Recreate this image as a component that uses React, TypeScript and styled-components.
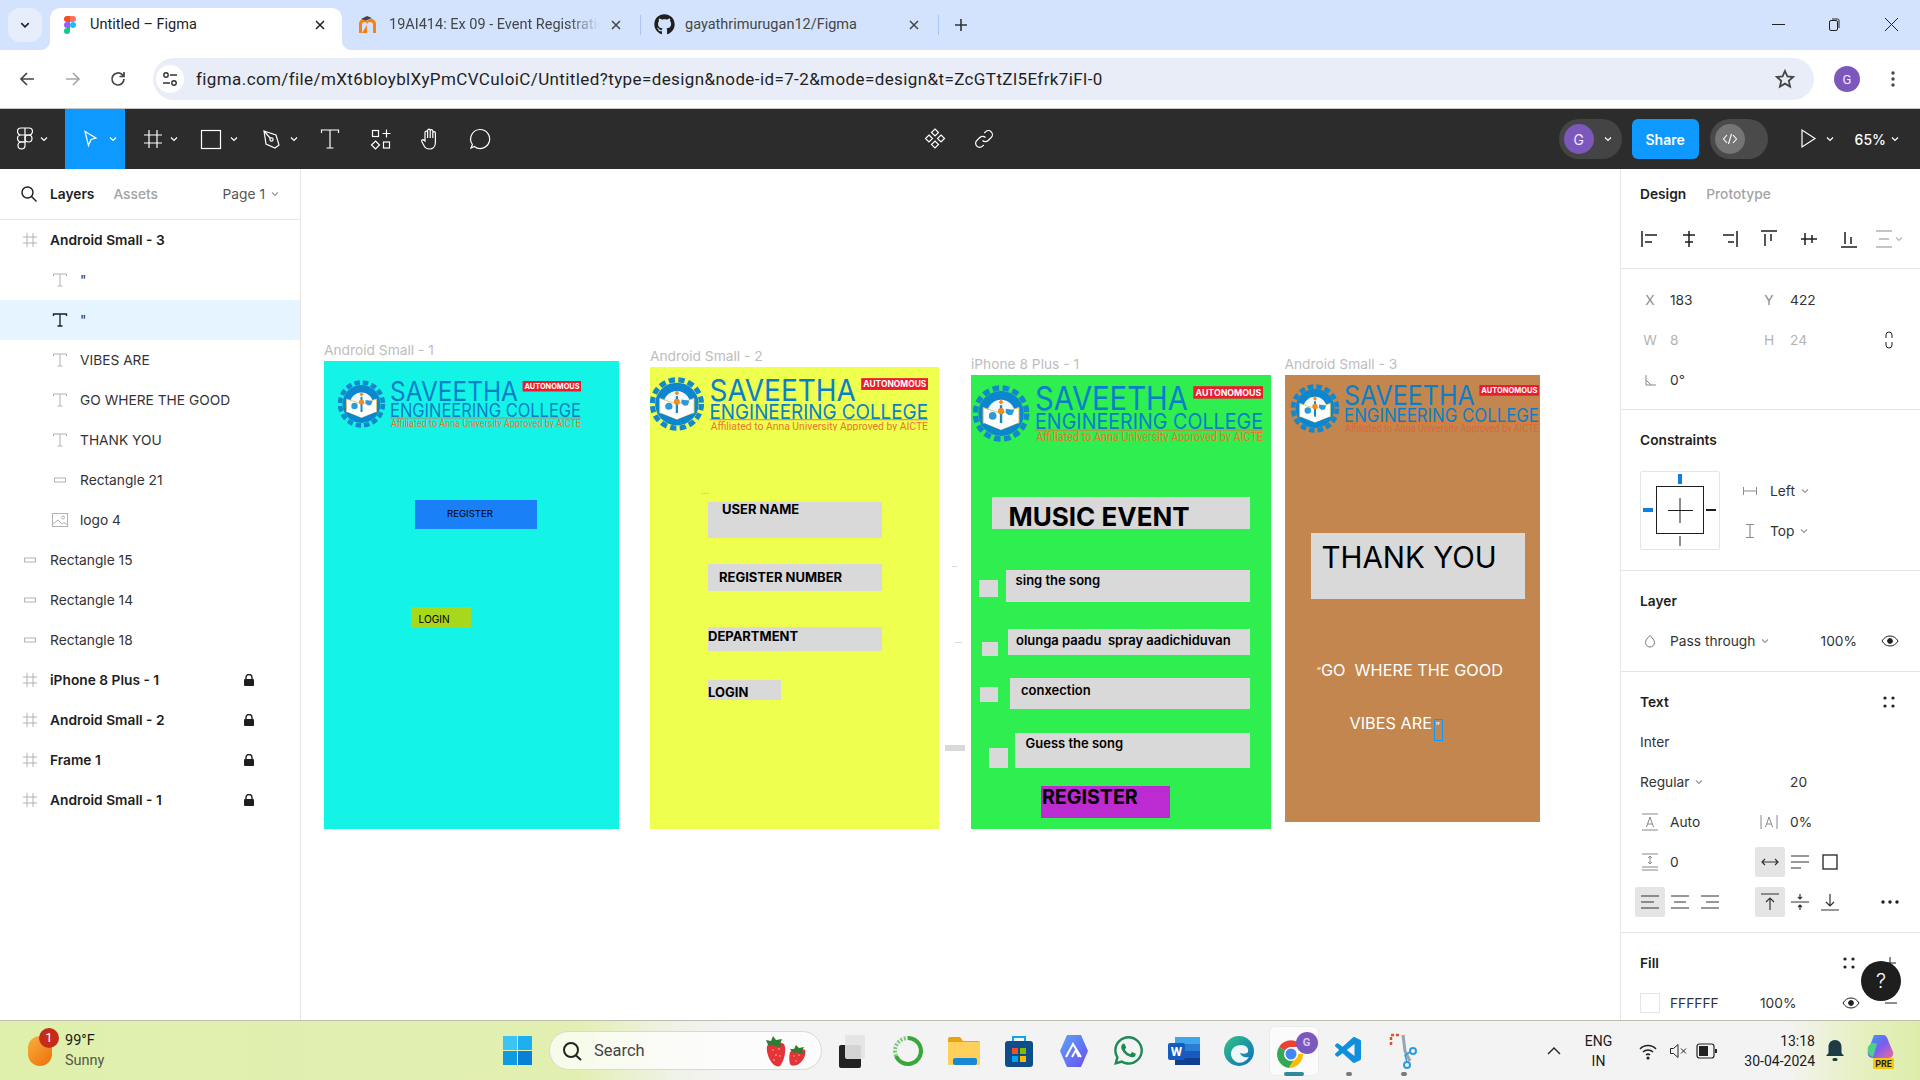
import React from "react";
import styled, { createGlobalStyle, css } from "styled-components";
import { FaGithub, FaWhatsapp } from "react-icons/fa";
import { VscVscode } from "react-icons/vsc";

const Global = createGlobalStyle`
  html, body { margin: 0; padding: 0; background: #fff; overflow: hidden; }
  * { box-sizing: border-box; }
  #root { width: 1920px; height: 1080px; }
`;

const UI = `"Roboto", "Liberation Sans", sans-serif`;
const INTER = `"Inter", "Liberation Sans", sans-serif`;

const Page = styled.div`
  width: 1920px; height: 1080px; display: flex; flex-direction: column; overflow: hidden;
  font-family: ${UI}; color: #1e1e1e;
`;

/* ---------- browser chrome ---------- */
const TabStrip = styled.div`
  height: 50px; background: #d3e3fd; display: flex; align-items: flex-end; flex: none; color: #1f1f1f;
`;
const TabSearch = styled.div`
  width: 34px; height: 34px; margin: 0 8px 8px 8px; border-radius: 12px; background: #e6eefc;
  display: flex; align-items: center; justify-content: center;
`;
const Tab = styled.div<{ $active?: boolean; $w: number; $pl: number; $pr: number; $gap: number }>`
  width: ${p => p.$w}px; height: 42px; padding: 0 ${p => p.$pr}px 9px ${p => p.$pl}px; display: flex; align-items: center;
  gap: ${p => p.$gap}px; position: relative; font-size: 14.5px; color: #444746;
  ${p => p.$active && css`
    background: #fff; border-radius: 10px 10px 0 0; color: #1f1f1f;
    &::before, &::after { content: ""; position: absolute; bottom: 0; width: 10px; height: 10px; }
    &::before { left: -10px; background: radial-gradient(circle at 0 0, transparent 10px, #fff 10.5px); }
    &::after { right: -10px; background: radial-gradient(circle at 100% 0, transparent 10px, #fff 10.5px); }
  `}
`;
const TabTitle = styled.span<{ $fade?: boolean }>`
  flex: 1; white-space: nowrap; overflow: hidden;
  ${p => p.$fade && css`-webkit-mask-image: linear-gradient(90deg, #000 85%, transparent 100%);`}
`;
const TabSep = styled.div`
  width: 1px; height: 20px; background: #a8c4ef; align-self: center; margin-top: 0; flex: none;
`;
const NewTab = styled.div`
  width: 44px; display: flex; justify-content: center; align-self: center;
`;
const WinButtons = styled.div`
  margin-left: auto; display: flex; align-self: stretch; align-items: center; height: 48px;
`;
const WinButton = styled.div<{ $w: number }>`
  width: ${p => p.$w}px; display: flex; justify-content: center;
`;
const ChromeBar = styled.div`
  height: 59px; background: #fff; flex: none; border-bottom: 1px solid #c8c8c8; display: flex; align-items: center;
  border-top-right-radius: 8px; position: relative;
`;
const NavButton = styled.div<{ $w: number }>`
  width: ${p => p.$w}px; display: flex; justify-content: center; flex: none;
`;
const UrlBar = styled.div`
  margin-left: 9px; width: 1661px; height: 42px; border-radius: 21px; background: #e9edf8; display: flex; align-items: center; flex: none;
  padding: 0 18px 0 3px;
`;
const UrlTune = styled.div`
  width: 28px; height: 28px; border-radius: 50%; background: #fff; display: flex; align-items: center; justify-content: center; flex: none;
`;
const UrlText = styled.span`
  margin-left: 12px; font-size: 17px; letter-spacing: 0.4px; color: #1f1f1f; white-space: nowrap; flex: 1;
`;
const Avatar = styled.div<{ $size: number; $font: number }>`
  width: ${p => p.$size}px; height: ${p => p.$size}px; border-radius: 50%; background: #7c58bd; color: #f1e9ff; flex: none;
  font-size: ${p => p.$font}px; display: flex; align-items: center; justify-content: center;
`;

/* ---------- figma toolbar ---------- */
const Toolbar = styled.div`
  height: 60px; background: #2c2c2c; flex: none; display: flex; align-items: stretch; color: #fff;
`;
const Tool = styled.div<{ $w: number; $pl: number; $gap?: number; $active?: boolean; $ml?: number }>`
  width: ${p => p.$w}px; padding-left: ${p => p.$pl}px; display: flex; align-items: center; gap: ${p => p.$gap ?? 0}px; flex: none;
  margin-left: ${p => p.$ml ?? 0}px;
  background: ${p => (p.$active ? "#0d99ff" : "transparent")};
`;
const ToolbarRight = styled.div`
  margin-left: auto; display: flex; align-items: center; padding-right: 21px; font-family: ${INTER}; font-size: 14px;
`;
const Pill = styled.div<{ $w: number; $mr: number; $bg: string }>`
  width: ${p => p.$w}px; margin-right: ${p => p.$mr}px; height: 40px; border-radius: 20px; background: ${p => p.$bg};
  display: flex; align-items: center; padding-left: 5px; gap: 10px;
`;
const ShareButton = styled.div`
  width: 67px; height: 40px; border-radius: 6px; background: #0d99ff; margin-right: 11px; color: #fff; font-weight: 600; font-size: 14px;
  display: flex; align-items: center; justify-content: center;
`;
const DevKnob = styled.div`
  width: 30px; height: 30px; border-radius: 50%; background: #757575; display: flex; align-items: center; justify-content: center; margin-left: 0;
`;
const PlayWrap = styled.div`
  margin-right: 6px; flex: none;
`;
const ZoomLabel = styled.span`
  margin-left: 21px; margin-right: 5px; font-weight: 500;
`;

/* ---------- main ---------- */
const Main = styled.div`
  height: 851px; display: flex; flex: none; font-family: ${INTER}; background: #fff;
`;
const LeftPanel = styled.aside`
  width: 301px; border-right: 1px solid #e5e5e5; flex: none; display: flex; flex-direction: column;
`;
const LeftHead = styled.div`
  height: 51px; border-bottom: 1px solid #e5e5e5; display: flex; align-items: center; padding: 0 21px 0 20px; flex: none; font-size: 13.75px;
`;
const TabLabel = styled.span<{ $on?: boolean; $ml: number }>`
  margin-left: ${p => p.$ml}px; font-weight: ${p => (p.$on ? 600 : 500)}; color: ${p => (p.$on ? "#1e1e1e" : "#a3a3a3")}; font-size: 13.75px;
`;
const PageSelect = styled.div`
  margin-left: auto; display: flex; align-items: center; gap: 6px; color: #555;
`;
const LayerRow = styled.div<{ $indent: boolean; $selected?: boolean }>`
  height: 40px; display: flex; align-items: center; flex: none; padding: 0 46px 0 ${p => (p.$indent ? 50 : 20)}px;
  gap: 10px; background: ${p => (p.$selected ? "#e5f4ff" : "transparent")};
`;
const LayerName = styled.span<{ $strong?: boolean }>`
  font-size: 13.75px; font-weight: ${p => (p.$strong ? 600 : 400)}; color: ${p => (p.$strong ? "#1e1e1e" : "#333")}; flex: 1; white-space: nowrap;
`;
const LayerIcon = styled.div`
  width: 20px; display: flex; justify-content: center; flex: none; color: #b2b2b2;
`;

const Canvas = styled.main`
  flex: 1; position: relative; overflow: hidden; background: #fff;
`;
const ArtFrame = styled.div<{ $x: number; $y: number; $w: number; $h: number; $bg: string }>`
  position: absolute; left: ${p => p.$x}px; top: ${p => p.$y}px; width: ${p => p.$w}px; height: ${p => p.$h}px; background: ${p => p.$bg};
`;
const FrameLabel = styled.span`
  position: absolute; left: 0; bottom: 100%; margin-bottom: 2px; font-size: 13.75px; line-height: 17px; color: #bdbdbd; white-space: nowrap;
`;
const Block = styled.div<{ $x: number; $y: number; $w: number; $h: number; $bg?: string }>`
  position: absolute; left: ${p => p.$x}px; top: ${p => p.$y}px; width: ${p => p.$w}px; height: ${p => p.$h}px; background: ${p => p.$bg ?? "#d9d9d9"};
`;
const BlockText = styled.span<{ $x: number; $cy: number; $size: number; $weight: number; $color?: string }>`
  position: absolute; left: ${p => p.$x}px; top: ${p => p.$cy}px; transform: translateY(-50%); font-size: ${p => p.$size}px;
  font-weight: ${p => p.$weight}; color: ${p => p.$color ?? "#000"}; white-space: pre; line-height: 1;
`;
const TinyQuote = styled.span`
  font-size: 10px; vertical-align: 1px;
`;
const Selection = styled.div`
  position: absolute; left: 149px; top: 344px; width: 9px; height: 22px; border: 1.5px solid #0d99ff; color: #fff;
  font-size: 10px; line-height: 12px; padding-left: 1px;
`;
const LogoSvg = styled.svg<{ $x: number; $y: number; $w: number; $h: number }>`
  position: absolute; left: ${p => p.$x}px; top: ${p => p.$y}px; width: ${p => p.$w}px; height: ${p => p.$h}px;
`;

/* ---------- right panel ---------- */
const RightPanel = styled.aside`
  width: 300px; border-left: 1px solid #e5e5e5; flex: none; font-size: 13.75px; color: #333; overflow: hidden; position: relative;
`;
const RightTabs = styled.div`
  height: 50px; display: flex; align-items: center; padding-left: 19px; gap: 20px;
`;
const Section = styled.section<{ $pt?: number; $h: number }>`
  height: ${p => p.$h}px; border-bottom: 1px solid #e5e5e5; padding: ${p => p.$pt ?? 0}px 0 0 19px;
`;
const AlignRow = styled.div`
  height: 40px; display: flex; align-items: center; margin-left: -1px;
`;
const AlignCell = styled.div<{ $w: number }>`
  width: ${p => p.$w}px; display: flex; align-items: center; justify-content: center; flex: none; gap: 2px;
`;
const SectionTitle = styled.div`
  height: 40px; display: flex; align-items: center; justify-content: space-between; font-weight: 600; color: #1e1e1e; padding-right: 25px;
`;
const FillTitle = styled(SectionTitle)`
  margin-top: 10px; padding-left: 19px; padding-right: 23px;
`;
const PropRow = styled.div<{ $h?: number }>`
  height: ${p => p.$h ?? 40}px; display: grid; grid-template-columns: 30px 89px 31px 89px 20px; align-items: center;
`;
const PropLabel = styled.span<{ $muted?: boolean }>`
  width: 20px; text-align: center; color: ${p => (p.$muted ? "#b3b3b3" : "#8c8c8c")}; display: flex; justify-content: center;
`;
const PropValue = styled.span<{ $muted?: boolean; $ml?: number; $w?: number; $span?: boolean }>`
  color: ${p => (p.$muted ? "#b3b3b3" : "#333")}; display: flex; align-items: center; gap: 6px; white-space: nowrap;
  margin-left: ${p => p.$ml ?? 0}px;
  ${p => p.$w && `width: ${p.$w}px;`}
  ${p => p.$span && `grid-column: 1 / span 2;`}
`;
const ConstraintBody = styled.div`
  display: flex; margin-top: 11px;
`;
const ConstraintBox = styled.div`
  width: 80px; height: 79px; border: 1px solid #e5e5e5; border-radius: 2px; flex: none;
`;
const ConstraintSelects = styled.div`
  margin-left: 22px; display: flex; flex-direction: column;
`;
const ConstraintRow = styled.div`
  height: 40px; display: flex; align-items: center; gap: 12px; color: #333;
`;
const LayerModeRow = styled.div`
  height: 40px; display: flex; align-items: center; padding-right: 21px;
`;
const Percent = styled.span`
  margin-left: auto; margin-right: 24px;
`;
const ButtonRow = styled.div`
  height: 40px; display: flex; align-items: center; margin-left: -5px;
`;
const InlineButtons = styled.div`
  display: flex; margin-left: -5px;
`;
const SquareBtn = styled.div<{ $on?: boolean; $ml?: number }>`
  width: 30px; height: 30px; border-radius: 2px; display: flex; align-items: center; justify-content: center; flex: none;
  margin-left: ${p => p.$ml ?? 0}px; background: ${p => (p.$on ? "#e5e5e5" : "transparent")};
`;
const PlainRow = styled.div`
  height: 40px; display: flex; align-items: center;
`;
const FillRow = styled(PlainRow)`
  padding-left: 19px;
`;
const Swatch = styled.div`
  width: 20px; height: 20px; border: 1px solid #e5e5e5; background: #fff; flex: none;
`;
const FillIcons = styled.div`
  margin-left: 46px; display: flex; align-items: center; gap: 24px;
`;
const FillHead = styled.div`
  display: flex; align-items: center; gap: 28px;
`;
const HelpBubble = styled.div`
  position: absolute; left: 240px; top: 792px; width: 40px; height: 40px; border-radius: 50%; background: #1e1e1e; color: #fff;
  font-size: 20px; display: flex; align-items: center; justify-content: center; font-weight: 300;
`;

/* ---------- taskbar ---------- */
const Taskbar = styled.footer`
  height: 60px; flex: none; border-top: 1px solid #bcbfb0; display: flex; align-items: center; color: #1b1b1b;
  background: linear-gradient(90deg, #dff0ac 0, #e2efb2 30%, #eff2e6 35%, #f3f3f3 38%, #f3f3f3 93%, #e6f0c0 97%, #dcedaa 100%);
`;
const Weather = styled.div`
  width: 503px; flex: none; height: 100%; position: relative; display: flex; flex-direction: column; justify-content: center; padding-left: 65px;
  font-size: 14.5px; line-height: 20px;
`;
const Sun = styled.div`
  position: absolute; left: 28px; top: 15px; width: 24px; height: 30px; border-radius: 12px; background: linear-gradient(135deg, #f8b13a, #ee6d0d);
`;
const Badge = styled.div`
  position: absolute; left: 39px; top: 7px; width: 20px; height: 20px; border-radius: 50%; background: #c42b1c; color: #fff; font-size: 13px;
  display: flex; align-items: center; justify-content: center;
`;
const SunnyText = styled.span`
  color: #55584a;
`;
const StartIcon = styled.div`
  width: 29px; height: 29px; flex: none; margin-right: 17px; display: grid; grid-template-columns: 1fr 1fr; gap: 1.5px;
`;
const StartPane = styled.div<{ $bg: string }>`
  background: ${p => p.$bg};
`;
const SearchBox = styled.div`
  width: 273px; height: 39px; border-radius: 20px; background: rgba(255, 255, 255, 0.72); border: 1px solid #d6dcca; display: flex; align-items: center;
  padding: 0 12px 0 11px; flex: none; font-size: 16.5px; color: #444;
`;
const SearchLabel = styled.span`
  margin-left: 11px; flex: 1;
`;
const AppSlot = styled.div<{ $active?: boolean; $dot?: string; $w?: number }>`
  width: ${p => p.$w ?? 55}px; height: 48px; flex: none; display: flex; align-items: center; justify-content: center; position: relative; border-radius: 5px;
  ${p => p.$active && css`background: #fbfbfb; box-shadow: 0 0 0 1px #ececec; width: 48px; margin: 0 3.5px;`}
  ${p => p.$dot && css`
    &::after { content: ""; position: absolute; bottom: -1px; left: 50%; transform: translateX(-50%); height: 4px; border-radius: 2px;
      width: ${p.$active ? 20 : 6}px; background: ${p.$dot}; }
  `}
`;
const ChromeBadge = styled.div`
  position: absolute; left: 26px; top: 5px; width: 22px; height: 22px; border-radius: 50%; background: #7c58bd; color: #d9ccf0; font-size: 11px; font-weight: 700;
  display: flex; align-items: center; justify-content: center;
`;
const ChromeGlyph = styled.svg`
  margin-left: -6px; margin-top: 6px;
`;
const Tray = styled.div`
  margin-left: auto; display: flex; align-items: center; padding-right: 15px; height: 100%;
`;
const TraySlot = styled.div<{ $w: number }>`
  width: ${p => p.$w}px; display: flex; align-items: center; justify-content: center; flex: none;
`;
const LangStack = styled.div`
  width: 54px; text-align: center; font-size: 14px; line-height: 20px; margin-right: 8px; flex: none;
`;
const Clock = styled.div`
  width: 93px; text-align: right; font-size: 14px; line-height: 20px; flex: none;
`;

/* ---------- icons ---------- */
type IP = { s?: number; c?: string; w?: number; vb?: number; children?: React.ReactNode };
const Ic = ({ s = 24, c = "currentColor", w = 1, vb, children }: IP) => (
  <svg width={s} height={s} viewBox={`0 0 ${vb ?? s} ${vb ?? s}`} fill="none" stroke={c} strokeWidth={w} style={{ display: "block", flex: "none" }}>
    {children}
  </svg>
);
const Chev = ({ c = "#fff", s = 8 }: { c?: string; s?: number }) => (
  <svg width={s} height={s} viewBox="0 0 8 8" fill="none" stroke={c} strokeWidth="1.2" style={{ flex: "none" }}><path d="M1 2.5 4 5.5 7 2.5" /></svg>
);
const FrameGlyph = () => (
  <Ic s={14} c="#b2b2b2"><path d="M4 0v14M10 0v14M0 4h14M0 10h14" /></Ic>
);
const TGlyph = ({ dark }: { dark?: boolean }) => (
  <Ic s={16} c={dark ? "#1e1e1e" : "#b2b2b2"} w={dark ? 1.3 : 1}><path d="M1.5 4V2h13v2M8 2v12M5.5 14h5" /></Ic>
);
const RectGlyph = () => <Ic s={14} c="#b2b2b2"><rect x="1.5" y="5" width="11" height="4" /></Ic>;
const ImgGlyph = () => (
  <Ic s={16} c="#b2b2b2"><rect x="0.5" y="1.5" width="15" height="13" /><path d="M1 12l5-4 4 4 2-1.5 3 2" /><circle cx="11" cy="5.5" r="1.5" /></Ic>
);
const LockGlyph = () => (
  <svg width="10" height="12" viewBox="0 0 10 12" style={{ flex: "none" }}><path d="M2 5V3.5a3 3 0 0 1 6 0V5" fill="none" stroke="#1e1e1e" strokeWidth="1.4" /><rect y="5" width="10" height="7" rx="1" fill="#1e1e1e" /></svg>
);
const EyeGlyph = () => (
  <Ic s={18} c="#1e1e1e"><path d="M1 9c2-3.4 4.8-5 8-5s6 1.6 8 5c-2 3.4-4.8 5-8 5s-6-1.6-8-5Z" /><circle cx="9" cy="9" r="2.4" fill="#1e1e1e" /></Ic>
);
const Dots4 = () => (
  <svg width="12" height="12" viewBox="0 0 12 12" fill="#1e1e1e"><circle cx="2" cy="2" r="1.6" /><circle cx="10" cy="2" r="1.6" /><circle cx="2" cy="10" r="1.6" /><circle cx="10" cy="10" r="1.6" /></svg>
);
const AlignIcon = ({ d, c = "#1e1e1e" }: { d: string; c?: string }) => (
  <Ic s={18} c={c} w={1.5}><path d={d} /></Ic>
);
const LineIcon = ({ d, c = "#333", sw = 1.2 }: { d: string; c?: string; sw?: number }) => (
  <Ic s={18} c={c} w={sw}><path d={d} /></Ic>
);

const FigmaFavicon = () => (
  <svg width="12" height="18" viewBox="0 0 12 18" style={{ flex: "none", marginLeft: 2, marginRight: 2 }}>
    <path d="M3 0h3v6H3a3 3 0 0 1 0-6Z" fill="#f24e1e" /><path d="M6 0h3a3 3 0 0 1 0 6H6Z" fill="#ff7262" />
    <path d="M3 6h3v6H3a3 3 0 0 1 0-6Z" fill="#a259ff" /><circle cx="9" cy="9" r="3" fill="#1abcfe" />
    <path d="M3 12h3v3a3 3 0 1 1-3-3Z" fill="#0acf83" />
  </svg>
);
const MoodleFavicon = () => (
  <svg width="20" height="18" viewBox="0 0 20 18" style={{ flex: "none" }}>
    <path d="M3 17V8.5C3 7 4 6 5.5 6S8 7 8 8.5V17M8 9c0-2 1.200-3 3-3 2 0 3 1 3 3v8h3V8c0-3-2-5-5-5-2 0-3 .7-4 2-1-1.300-2-2-3.500-2C2 3 0 5 0 8v9h3Z" fill="#f98012" />
    <path d="M2 3l6-3 5 2-6 2.500Z" fill="#444" />
  </svg>
);
const FigmaMenu = () => (
  <svg width="18" height="26" viewBox="0 0 18 26" fill="none" stroke="#fff" strokeWidth="1.2" style={{ flex: "none" }}>
    <path d="M5 2h4v7H5a3.500 3.500 0 0 1 0-7ZM9 2h4a3.500 3.500 0 0 1 0 7H9ZM5 9h4v7H5a3.500 3.500 0 0 1 0-7Z" />
    <circle cx="12.500" cy="12.500" r="3.500" /><path d="M5 16h4v3.500A3.500 3.500 0 1 1 5 16Z" />
  </svg>
);

const Logo = ({ x, y, w, h, dim }: { x: number; y: number; w: number; h: number; dim?: boolean }) => (
  <LogoSvg $x={x} $y={y} $w={w} $h={h} viewBox="0 0 243 48" preserveAspectRatio="none">
    <circle cx="23.500" cy="24" r="21.500" fill="none" stroke="#1587cc" strokeWidth="4.500" strokeDasharray="5.500 3" />
    <circle cx="23.500" cy="24" r="19" fill="#0b86cf" />
    <circle cx="23.500" cy="24" r="11.500" fill="#f4fbff" />
    <path d="M8.500 19 23.500 24l15-5v13l-15 6-15-6Z" fill="#fff" stroke="#e8c25c" strokeWidth="0.800" />
    <path d="M9 32l14.500 6L38 32l-2 4-12.500 6L11 36Z" fill="#0b86cf" />
    <circle cx="16.500" cy="26" r="3.200" fill="#2a9ad8" />
    <path d="M27.500 20l7 1-1.500 4-3 .5-2.500-2Z" fill="#2a9ad8" />
    <rect x="22.500" y="17" width="2" height="15" fill="#1587cc" />
    <circle cx="23.500" cy="22" r="2.600" fill="#f08a24" />
    <path d="M21.500 14.500 23.500 12l2 2.500-2 2Z" fill="#f08a24" />
    <text x="52" y="21" fontFamily={INTER} fontSize="27" fontWeight="400" fill="#0a7fc9" textLength="128" lengthAdjust="spacingAndGlyphs">SAVEETHA</text>
    <text x="52" y="37" fontFamily={INTER} fontSize="18" fontWeight="400" fill="#0a7fc9" textLength="191" lengthAdjust="spacingAndGlyphs">ENGINEERING COLLEGE</text>
    <rect x="52" y="37.600" width="191" height="0.800" fill="#e9772c" />
    <text x="53" y="47" fontFamily={UI} fontSize="10" fill={dim ? "#d8683c" : "#e9772c"} textLength="190" lengthAdjust="spacingAndGlyphs">Affiliated to Anna University  Approved by AICTE</text>
    <rect x="184.600" y="1" width="58.400" height="10.500" fill="#ec1c2e" />
    <text x="186.500" y="9" fontFamily={INTER} fontSize="7.500" fontWeight="700" fill="#fff" textLength="55" lengthAdjust="spacingAndGlyphs">AUTONOMOUS</text>
  </LogoSvg>
);

const layers = [
  { n: "Android Small - 3", k: "f" },
  { n: '"', k: "t", i: 1 },
  { n: '"', k: "t", i: 1, sel: 1 },
  { n: "VIBES ARE", k: "t", i: 1 },
  { n: "GO WHERE THE GOOD", k: "t", i: 1 },
  { n: "THANK YOU", k: "t", i: 1 },
  { n: "Rectangle 21", k: "r", i: 1 },
  { n: "logo 4", k: "m", i: 1 },
  { n: "Rectangle 15", k: "r" },
  { n: "Rectangle 14", k: "r" },
  { n: "Rectangle 18", k: "r" },
  { n: "iPhone 8 Plus - 1", k: "f", l: 1 },
  { n: "Android Small - 2", k: "f", l: 1 },
  { n: "Frame 1", k: "f", l: 1 },
  { n: "Android Small - 1", k: "f", l: 1 },
];

const formBlocks = [
  { b: [58, 135, 174, 36], t: "USER NAME", x: 14, cy: 7 },
  { b: [58, 197, 174, 27], t: "REGISTER NUMBER", x: 11, cy: 13 },
  { b: [58, 260, 174, 24], t: "DEPARTMENT", x: 0, cy: 9 },
  { b: [58, 313, 73, 20], t: "LOGIN", x: 0, cy: 12 },
];
const musicRows = [
  { b: [35, 195, 244, 32], t: "sing the song", x: 9.6, cy: 10, c: [8, 205, 19, 17] },
  { b: [37, 254, 242, 26], t: "olunga paadu  spray aadichiduvan", x: 8, cy: 11, c: [11.4, 267, 15.6, 14] },
  { b: [39, 303, 240, 31], t: "conxection", x: 11, cy: 12, c: [9, 312, 18, 15] },
  { b: [43.5, 358, 235.5, 35], t: "Guess the song", x: 11, cy: 10, c: [18, 373, 19, 20] },
];

export default function App() {
  return (
    <Page>
      <Global />
      <TabStrip>
        <TabSearch><Chev c="#1f1f1f" s={10} /></TabSearch>
        <Tab $active $w={292} $pl={12} $pr={16} $gap={12}>
          <FigmaFavicon />
          <TabTitle>Untitled – Figma</TabTitle>
          <Ic s={12} c="#1f1f1f" w={1.5}><path d="M2 2l8 8M10 2l-8 8" /></Ic>
        </Tab>
        <Tab $w={298} $pl={17} $pr={18} $gap={10}>
          <MoodleFavicon />
          <TabTitle $fade>19AI414: Ex 09 - Event Registration</TabTitle>
          <Ic s={12} c="#444" w={1.5}><path d="M2 2l8 8M10 2l-8 8" /></Ic>
        </Tab>
        <TabSep />
        <Tab $w={297} $pl={13} $pr={18} $gap={10}>
          <FaGithub size={21} color="#1f1f1f" style={{ flex: "none" }} />
          <TabTitle>gayathrimurugan12/Figma</TabTitle>
          <Ic s={12} c="#444" w={1.5}><path d="M2 2l8 8M10 2l-8 8" /></Ic>
        </Tab>
        <TabSep />
        <NewTab><Ic s={14} c="#333" w={1.6}><path d="M7 1v12M1 7h12" /></Ic></NewTab>
        <WinButtons>
          <WinButton $w={56}><Ic s={14} c="#222"><path d="M1 7.500h13" /></Ic></WinButton>
          <WinButton $w={56}><Ic s={14} c="#222"><rect x="2.500" y="3.500" width="8" height="10" rx="1.500" /><path d="M5 2h5.500A1.500 1.500 0 0 1 12 3.500V11" /></Ic></WinButton>
          <WinButton $w={58}><Ic s={15} c="#222"><path d="M1 1l13 13M14 1 1 14" /></Ic></WinButton>
        </WinButtons>
      </TabStrip>

      <ChromeBar>
        <NavButton $w={54}><Ic s={18} c="#444746" w={1.7}><path d="M16 9H3M9 3 3 9l6 6" /></Ic></NavButton>
        <NavButton $w={38}><Ic s={18} c="#a6a8a8" w={1.7}><path d="M2 9h13M9 3l6 6-6 6" /></Ic></NavButton>
        <NavButton $w={52}><Ic s={18} c="#444746" w={1.7}><path d="M15 9a6 6 0 1 1-1.800-4.300L15 6.500M15 2v4.500h-4.500" /></Ic></NavButton>
        <UrlBar>
          <UrlTune><Ic s={18} c="#333" w={1.4}><circle cx="5" cy="5" r="2.200" /><path d="M9 5h7M2 13h7" /><circle cx="13" cy="13" r="2.200" /></Ic></UrlTune>
          <UrlText>figma.com/file/mXt6bloyblXyPmCVCuloiC/Untitled?type=design&amp;node-id=7-2&amp;mode=design&amp;t=ZcGTtZl5Efrk7iFl-0</UrlText>
          <Ic s={22} c="#444746" w={1.8}><path d="M11 3l2.400 5.400 5.800.6-4.400 3.900 1.300 5.700-5.100-3-5.100 3 1.300-5.700L2.800 9l5.800-.6Z" /></Ic>
        </UrlBar>
        <NavButton $w={66}><Avatar $size={26} $font={13}>G</Avatar></NavButton>
        <NavButton $w={26}><svg width="4" height="16" viewBox="0 0 4 16" fill="#444746"><circle cx="2" cy="2" r="1.700" /><circle cx="2" cy="8" r="1.700" /><circle cx="2" cy="14" r="1.700" /></svg></NavButton>
      </ChromeBar>

      <Toolbar>
        <Tool $w={65} $pl={16} $gap={6}><FigmaMenu /><Chev /></Tool>
        <Tool $w={60} $pl={13} $gap={7} $active>
          <Ic c="#fff" w={1.2}><path d="M7 4.500 18 11l-5 1.500-2.500 6Z" /></Ic><Chev />
        </Tool>
        <Tool $w={58} $pl={16} $gap={5}>
          <Ic c="#fff" w={1.2}><path d="M8 3v18M16 3v18M3 8h18M3 16h18" /></Ic><Chev />
        </Tool>
        <Tool $w={60} $pl={16} $gap={7}>
          <Ic c="#fff" w={1.2}><rect x="2.500" y="3.500" width="19" height="18" /></Ic><Chev />
        </Tool>
        <Tool $w={58} $pl={16} $gap={7}>
          <Ic c="#fff" w={1.2}><path d="M5 4 17 8l3 10-4 3-9-4ZM5 4l6.500 7.500" /><circle cx="12.500" cy="12.500" r="1.600" /></Ic><Chev />
        </Tool>
        <Tool $w={58} $pl={17}>
          <Ic c="#fff" w={1.2}><path d="M3.500 6V3h17v3M12 3v18M8.500 21h7" /></Ic>
        </Tool>
        <Tool $w={44} $pl={10}>
          <Ic c="#fff" w={1.200}><rect x="3.500" y="3.500" width="6" height="6" /><path d="M17.500 2.500v8M13.500 6.500h8M6.500 14l4 4-4 4-4-4Z" /><rect x="14.500" y="15" width="6" height="6" /></Ic>
        </Tool>
        <Tool $w={54} $pl={15}>
          <Ic c="#fff" w={1.2}><path d="M7 14V5.500a1.300 1.300 0 0 1 2.600 0V11 3.500a1.300 1.300 0 0 1 2.600 0V11 4a1.300 1.300 0 0 1 2.600 0v7-5a1.300 1.300 0 0 1 2.600 0v9.500c0 4-2.500 6.500-6 6.500-3 0-4.500-1.500-5.500-3.500L3.800 14.500c-.8-1.500 1.300-2.500 2.200-1.200Z" /></Ic>
        </Tool>
        <Tool $w={46} $pl={11}>
          <Ic c="#fff" w={1.2}><path d="M12 2.500a9.500 9.500 0 1 1-5.700 17L3 21l1.400-3.500A9.500 9.500 0 0 1 12 2.500Z" /></Ic>
        </Tool>
        <Tool $w={40} $pl={8} $ml={412}>
          <Ic c="#fff" w={1.2}><path d="M12 2l3.500 3.500L12 9 8.500 5.500ZM6 8l3.500 3.500L6 15l-3.500-3.500ZM18 8l3.500 3.500L18 15l-3.500-3.500ZM12 14l3.500 3.500L12 21l-3.500-3.500Z" /></Ic>
        </Tool>
        <Tool $w={40} $pl={8} $ml={9}>
          <Ic c="#fff" w={1.2}><path d="M10.500 13.500a4 4 0 0 0 5.700 0l3-3a4 4 0 0 0-5.700-5.700l-1.200 1.200M13.500 10.500a4 4 0 0 0-5.700 0l-3 3a4 4 0 0 0 5.700 5.700l1.200-1.200" /></Ic>
        </Tool>
        <ToolbarRight>
          <Pill $w={63} $mr={10} $bg="#444"><Avatar $size={30} $font={14}>G</Avatar><Chev /></Pill>
          <ShareButton>Share</ShareButton>
          <Pill $w={58} $mr={26} $bg="#4a4a4a">
            <DevKnob><Ic s={18} c="#fff" w={1.1}><path d="M6 5 2.500 9 6 13M12 5l3.500 4-3.500 4M10.500 4l-3 10" /></Ic></DevKnob>
          </Pill>
          <PlayWrap><Ic s={26} c="#fff" w={1.2}><path d="M8 4v17l13-8.500Z" /></Ic></PlayWrap>
          <Chev />
          <ZoomLabel>65%</ZoomLabel>
          <Chev />
        </ToolbarRight>
      </Toolbar>

      <Main>
        <LeftPanel>
          <LeftHead>
            <Ic s={18} c="#1e1e1e" w={1.4}><circle cx="7.500" cy="7.500" r="5.500" /><path d="M11.500 11.500 16.500 16.500" /></Ic>
            <TabLabel $on $ml={12}>Layers</TabLabel>
            <TabLabel $ml={19}>Assets</TabLabel>
            <PageSelect>Page 1 <Chev c="#999" /></PageSelect>
          </LeftHead>
          {layers.map((l, i) => (
            <LayerRow key={i} $indent={!!l.i} $selected={!!l.sel}>
              <LayerIcon>
                {l.k === "f" && <FrameGlyph />}
                {l.k === "t" && <TGlyph dark={!!l.sel} />}
                {l.k === "r" && <RectGlyph />}
                {l.k === "m" && <ImgGlyph />}
              </LayerIcon>
              <LayerName $strong={l.k === "f"}>{l.n}</LayerName>
              {l.l && <LockGlyph />}
            </LayerRow>
          ))}
        </LeftPanel>

        <Canvas>
          <ArtFrame $x={23} $y={192} $w={294.500} $h={468} $bg="#14f4e6">
            <FrameLabel>Android Small - 1</FrameLabel>
            <Logo x={14} y={19} w={243} h={48} />
            <Block $x={91} $y={139} $w={121.500} $h={29} $bg="#1a80f8"><BlockText $x={32} $cy={14} $size={9.600} $weight={400}>REGISTER</BlockText></Block>
            <Block $x={87} $y={246} $w={60} $h={21} $bg="#a8d81c"><BlockText $x={7.500} $cy={12} $size={10.200} $weight={400}>LOGIN</BlockText></Block>
          </ArtFrame>

          <ArtFrame $x={349} $y={198} $w={289} $h={462} $bg="#eeff4d">
            <FrameLabel>Android Small - 2</FrameLabel>
            <Logo x={0} y={10} w={278} h={54} />
            <BlockText $x={51} $cy={123} $size={9} $weight={400} $color="#b9c45a">...</BlockText>
            {formBlocks.map(f => (
              <Block key={f.t} $x={f.b[0]} $y={f.b[1]} $w={f.b[2]} $h={f.b[3]}>
                <BlockText $x={f.x} $cy={f.cy} $size={13} $weight={700}>{f.t}</BlockText>
              </Block>
            ))}
          </ArtFrame>

          <Block $x={651} $y={396.500} $w={5} $h={1} />
          <Block $x={654} $y={472.500} $w={7} $h={1.500} />
          <Block $x={644} $y={576} $w={20} $h={6} />

          <ArtFrame $x={670} $y={206} $w={300} $h={454} $bg="#2eee50">
            <FrameLabel>iPhone 8 Plus - 1</FrameLabel>
            <Logo x={2} y={10} w={290} h={57} />
            <Block $x={21} $y={122} $w={258} $h={32}><BlockText $x={16.500} $cy={20} $size={26} $weight={700}>MUSIC EVENT</BlockText></Block>
            {musicRows.map(r => (
              <React.Fragment key={r.t}>
                <Block $x={r.c[0]} $y={r.c[1]} $w={r.c[2]} $h={r.c[3]} />
                <Block $x={r.b[0]} $y={r.b[1]} $w={r.b[2]} $h={r.b[3]}>
                  <BlockText $x={r.x} $cy={r.cy} $size={13} $weight={600}>{r.t}</BlockText>
                </Block>
              </React.Fragment>
            ))}
            <Block $x={70} $y={411} $w={129} $h={32} $bg="#bb2bd0"><BlockText $x={1} $cy={12} $size={19.600} $weight={700}>REGISTER</BlockText></Block>
          </ArtFrame>

          <ArtFrame $x={983.500} $y={206} $w={255} $h={447} $bg="#c2864e">
            <FrameLabel>Android Small - 3</FrameLabel>
            <Logo x={6} y={9} w={248} h={49} dim />
            <Block $x={26} $y={158} $w={214} $h={66}><BlockText $x={11} $cy={25} $size={29.500} $weight={400}>THANK YOU</BlockText></Block>
            <BlockText $x={32} $cy={295} $size={16.250} $weight={400} $color="#fff"><TinyQuote>“</TinyQuote>GO  WHERE THE GOOD</BlockText>
            <BlockText $x={65} $cy={348} $size={16.250} $weight={400} $color="#fff">VIBES ARE</BlockText>
            <Selection>”</Selection>
          </ArtFrame>
        </Canvas>

        <RightPanel>
          <RightTabs>
            <TabLabel $on $ml={0}>Design</TabLabel>
            <TabLabel $ml={0}>Prototype</TabLabel>
          </RightTabs>
          <Section $h={50}>
            <AlignRow>
              <AlignCell $w={20}><AlignIcon d="M2 1v16M5 5h12M5 12h7" /></AlignCell>
              <AlignCell $w={60}><AlignIcon d="M9 1v16M3 5h12M5 12h8" /></AlignCell>
              <AlignCell $w={21}><AlignIcon d="M16 1v16M2 5h11M7 12h6" /></AlignCell>
              <AlignCell $w={58}><AlignIcon d="M1 1h16M5 4v12M11 4v7" /></AlignCell>
              <AlignCell $w={22}><AlignIcon d="M1 9h16M5 3v12M12 5v8" /></AlignCell>
              <AlignCell $w={58}><AlignIcon d="M1 17h16M5 2v12M11 7v7" /></AlignCell>
              <AlignCell $w={22}><AlignIcon c="#b3b3b3" d="M1 1h16M1 17h16M4 9h10" /><Chev c="#b3b3b3" /></AlignCell>
            </AlignRow>
          </Section>
          <Section $h={141} $pt={11}>
            <PropRow><PropLabel>X</PropLabel><PropValue>183</PropValue><PropLabel>Y</PropLabel><PropValue>422</PropValue></PropRow>
            <PropRow>
              <PropLabel $muted>W</PropLabel><PropValue $muted>8</PropValue><PropLabel $muted>H</PropLabel><PropValue $muted>24</PropValue>
              <Ic s={20} c="#1e1e1e" w={1}><path d="M7 8V5a3 3 0 0 1 6 0v3M7 12v3a3 3 0 0 0 6 0v-3" /></Ic>
            </PropRow>
            <PropRow>
              <PropLabel><Ic s={14} c="#888"><path d="M3 2v10h10M3 7l5 5" /></Ic></PropLabel><PropValue>0°</PropValue>
            </PropRow>
          </Section>
          <Section $h={161} $pt={10}>
            <SectionTitle>Constraints</SectionTitle>
            <ConstraintBody>
              <ConstraintBox>
                <svg width="78" height="77" viewBox="0 0 78 77" style={{ display: "block" }}>
                  <rect x="15.500" y="14.500" width="47" height="47" fill="none" stroke="#1e1e1e" />
                  <path d="M39 26v25M27 38.500h25" stroke="#1e1e1e" fill="none" />
                  <rect x="37" y="2" width="4" height="10" fill="#0d7fe0" />
                  <rect x="2" y="36" width="10" height="4" fill="#0d7fe0" />
                  <rect x="65" y="37" width="10" height="2" fill="#1e1e1e" />
                  <rect x="38.500" y="64" width="1" height="10" fill="#1e1e1e" />
                </svg>
              </ConstraintBox>
              <ConstraintSelects>
                <ConstraintRow><Ic s={16} c="#8c8c8c"><path d="M1.500 4v8M14.500 4v8M1.500 8h13" /></Ic><PropValue>Left <Chev c="#999" /></PropValue></ConstraintRow>
                <ConstraintRow><Ic s={16} c="#8c8c8c" w={1.2}><path d="M4 1.500h8M4 14.500h8M8 1.500v13" /></Ic><PropValue>Top <Chev c="#999" /></PropValue></ConstraintRow>
              </ConstraintSelects>
            </ConstraintBody>
          </Section>
          <Section $h={101} $pt={10}>
            <SectionTitle>Layer</SectionTitle>
            <LayerModeRow>
              <PropLabel><Ic s={14} c="#777"><path d="M7 1.500c2.500 2.500 4.500 4.800 4.500 7a4.500 4.500 0 0 1-9 0c0-2.200 2-4.500 4.500-7Z" /></Ic></PropLabel>
              <PropValue $ml={10}>Pass through <Chev c="#999" /></PropValue>
              <Percent>100%</Percent>
              <EyeGlyph />
            </LayerModeRow>
          </Section>
          <Section $h={261} $pt={10}>
            <SectionTitle>Text<Dots4 /></SectionTitle>
            <PlainRow>Inter</PlainRow>
            <PropRow>
              <PropValue $span>Regular <Chev c="#999" /></PropValue>
              <span />
              <PropValue>20</PropValue>
            </PropRow>
            <PropRow>
              <PropLabel><Ic s={18} c="#888"><path d="M1 1h16M1 17h16M5.500 14 9 4l3.500 10M6.800 11h4.400" /></Ic></PropLabel><PropValue>Auto</PropValue>
              <PropLabel><Ic s={20} c="#888"><path d="M2 3v14M18 3v14M6.500 15 10 5l3.500 10M7.800 12h4.400" /></Ic></PropLabel><PropValue>0%</PropValue>
            </PropRow>
            <PropRow>
              <PropLabel><Ic s={18} c="#888"><path d="M1 1h16M1 17h16M1 14h16M9 3v8M7 5l2-2 2 2M7 9l2 2 2-2" /></Ic></PropLabel><PropValue>0</PropValue>
              <SquareBtn $on $ml={-4}><LineIcon d="M1 9h16M4 6 1 9l3 3M14 6l3 3-3 3" /></SquareBtn>
              <InlineButtons>
                <SquareBtn><LineIcon d="M0 3h18M0 9h18M0 15h10" /></SquareBtn>
                <SquareBtn><Ic s={16} c="#222" w={1.3}><rect x="1" y="1" width="14" height="14" /></Ic></SquareBtn>
              </InlineButtons>
            </PropRow>
            <ButtonRow>
              <SquareBtn $on><LineIcon d="M0 3h18M0 9h13M0 15h18" /></SquareBtn>
              <SquareBtn><LineIcon d="M0 3h18M3 9h12M0 15h18" /></SquareBtn>
              <SquareBtn><LineIcon d="M0 3h18M5 9h13M0 15h18" /></SquareBtn>
              <SquareBtn $on $ml={30}><LineIcon d="M0 1h18M9 17V5M5 9l4-4 4 4" /></SquareBtn>
              <SquareBtn><LineIcon d="M0 9h18M9 1v5M7 4l2 2 2-2M9 17v-5M7 14l2-2 2 2" /></SquareBtn>
              <SquareBtn><LineIcon d="M0 17h18M9 1v12M5 9l4 4 4-4" /></SquareBtn>
              <SquareBtn $ml={30}><svg width="18" height="4" viewBox="0 0 18 4" fill="#1e1e1e"><circle cx="2" cy="2" r="1.700" /><circle cx="9" cy="2" r="1.700" /><circle cx="16" cy="2" r="1.700" /></svg></SquareBtn>
            </ButtonRow>
          </Section>
          <FillTitle>
            Fill
            <FillHead><Dots4 /><Ic s={14} c="#1e1e1e"><path d="M7 1v12M1 7h12" /></Ic></FillHead>
          </FillTitle>
          <FillRow>
            <Swatch /><PropValue $ml={10} $w={90}>FFFFFF</PropValue>100%
            <FillIcons><EyeGlyph /><Ic s={14} c="#1e1e1e"><path d="M1 7h12" /></Ic></FillIcons>
          </FillRow>
          <HelpBubble>?</HelpBubble>
        </RightPanel>
      </Main>

      <Taskbar>
        <Weather>
          <Sun /><Badge>1</Badge>
          <span>99°F</span>
          <SunnyText>Sunny</SunnyText>
        </Weather>
        <StartIcon>
          <StartPane $bg="#3cc4f5" /><StartPane $bg="#1eb0ee" /><StartPane $bg="#0f9be0" /><StartPane $bg="#0a7fd6" />
        </StartIcon>
        <SearchBox>
          <Ic s={22} c="#222" w={2}><circle cx="10" cy="10" r="7" /><path d="M15 15.500 20 20" /></Ic>
          <SearchLabel>Search</SearchLabel>
          <svg width="44" height="32" viewBox="0 0 44 32">
            <path d="M2 11c3-4 13-5 17-2 3 6 0 17-4 22-2 1-5 0-7-2C4 25 1 17 2 11Z" fill="#e5333a" />
            <path d="M25 17c3-3 11-4 15-2 2 5-3 13-8 15-3 1-6 1-7-1-1-3-1-8 0-12Z" fill="#e5333a" />
            <path d="M3 10 1 5l5 1 2-5 3 4 6-1-2 5 3 2-6 1-4-2-3 1ZM27 17l-2-3 4 0 2-4 3 3 5-1-2 4 3 2-5 1-3-2-3 1Z" fill="#2f7d32" />
            <g fill="#f7d36a"><circle cx="8" cy="15" r=".8" /><circle cx="14" cy="14" r=".8" /><circle cx="11" cy="20" r=".8" /><circle cx="15" cy="21" r=".8" /><circle cx="9" cy="25" r=".8" /><circle cx="29" cy="21" r=".7" /><circle cx="34" cy="20" r=".7" /><circle cx="31" cy="26" r=".7" /></g>
          </svg>
        </SearchBox>
        <AppSlot $w={58}>
          <svg width="30" height="36" viewBox="0 0 30 36"><rect x="3" y="12" width="22" height="23" rx="2" fill="#222" /><rect x="9" y="2" width="20" height="24" rx="2" fill="#e4e4e4" opacity=".92" /></svg>
        </AppSlot>
        <AppSlot $w={56}>
          <svg width="32" height="34" viewBox="0 0 32 34" fill="none"><path d="M16 4a13 13 0 1 1-12 18" stroke="#38a838" strokeWidth="4" /><path d="M4 22a13 13 0 0 1 12-18" stroke="#7cc97c" strokeWidth="4" strokeDasharray="2 1.500" /></svg>
        </AppSlot>
        <AppSlot>
          <svg width="34" height="30" viewBox="0 0 34 30"><path d="M1 3a2 2 0 0 1 2-2h10l3 4h15a2 2 0 0 1 2 2v4H1Z" fill="#e8a311" /><rect x="1" y="6" width="32" height="23" rx="1" fill="#ffd15c" /><rect x="6" y="22" width="24" height="7" rx="2" fill="#1a86d6" /></svg>
        </AppSlot>
        <AppSlot>
          <svg width="30" height="34" viewBox="0 0 30 34"><path d="M9 8V3h12v5" stroke="#0ea5e9" strokeWidth="2" fill="none" /><rect x="1" y="7" width="28" height="26" rx="3" fill="#0f4c8a" /><rect x="8" y="14" width="6" height="6" fill="#f25022" /><rect x="16" y="14" width="6" height="6" fill="#7fba00" /><rect x="8" y="22" width="6" height="6" fill="#00a4ef" /><rect x="16" y="22" width="6" height="6" fill="#ffb900" /></svg>
        </AppSlot>
        <AppSlot>
          <svg width="30" height="34" viewBox="0 0 30 34"><defs><linearGradient id="av" x1="0" y1="0" x2="1" y2="1"><stop offset="0" stopColor="#5ea4f5" /><stop offset="1" stopColor="#6a4ff0" /></linearGradient></defs><path d="M8 1h14l7 16-7 16H8L1 17Z" fill="url(#av)" /><path d="M7 23 14 10l8 13M13 23l4-7 3 7" stroke="#fff" strokeWidth="2" fill="none" /></svg>
        </AppSlot>
        <AppSlot><FaWhatsapp size={33} color="#1d8a55" /></AppSlot>
        <AppSlot>
          <svg width="32" height="30" viewBox="0 0 32 30"><rect x="7" y="1" width="25" height="28" rx="2" fill="#2b7cd3" /><rect x="7" y="1" width="25" height="7" fill="#41a5ee" /><rect x="7" y="15" width="25" height="7" fill="#185abd" /><rect x="7" y="22" width="25" height="7" fill="#103f91" /><rect x="0" y="7" width="17" height="17" rx="2" fill="#185abd" /><text x="8.500" y="20" textAnchor="middle" fontFamily={UI} fontSize="13" fontWeight="700" fill="#fff">W</text></svg>
        </AppSlot>
        <AppSlot>
          <svg width="32" height="32" viewBox="0 0 32 32"><defs><linearGradient id="ed" x1="0" y1="0" x2="1" y2="1"><stop offset="0" stopColor="#33c481" /><stop offset="1" stopColor="#0c6cc4" /></linearGradient></defs><circle cx="16" cy="16" r="15" fill="url(#ed)" /><path d="M8 19c0-6 5-9 10-9 5 0 8 3 7 7-1 2-5 2-8 1 1 3 4 5 9 4-3 5-9 7-13 5-3-2-5-5-5-8Z" fill="#fff" opacity=".92" /></svg>
        </AppSlot>
        <AppSlot $active $dot="#2f8a9b">
          <ChromeGlyph width="30" height="30" viewBox="0 0 30 30"><path d="M15 15 3 8a14 14 0 0 1 24 0H15Z" fill="#ea4335" /><path d="M15 15 3 8a14 14 0 0 0 10 21l6-10Z" fill="#34a853" /><path d="M15 15h12a14 14 0 0 1-14 14l6-10Z" fill="#fbbc05" /><circle cx="15" cy="15" r="7" fill="#fff" /><circle cx="15" cy="15" r="5.500" fill="#4285f4" /></ChromeGlyph>
          <ChromeBadge>G</ChromeBadge>
        </AppSlot>
        <AppSlot $dot="#7a7a7a"><VscVscode size={32} color="#0f8fdc" /></AppSlot>
        <AppSlot $dot="#7a7a7a">
          <svg width="30" height="36" viewBox="0 0 30 36" fill="none"><path d="M10 2H2v11" stroke="#e0532a" strokeWidth="2.500" strokeDasharray="3 2" /><path d="M14 2l2 16 5 10" stroke="#9aa5ad" strokeWidth="3" /><circle cx="24" cy="18" r="3" stroke="#2a9be0" strokeWidth="2" /><circle cx="18" cy="32" r="3" stroke="#2a9be0" strokeWidth="2" /><path d="M21 19l-5 3 2 7" stroke="#2a9be0" strokeWidth="1.500" /></svg>
        </AppSlot>
        <Tray>
          <TraySlot $w={36}><Ic s={16} c="#222" w={1.4}><path d="M2 11l6-6 6 6" /></Ic></TraySlot>
          <LangStack>ENG<br />IN</LangStack>
          <TraySlot $w={29.500}><Ic s={20} c="#222" w={1.5}><path d="M2 8a11 11 0 0 1 16 0M5 11a7 7 0 0 1 10 0M8 14a3 3 0 0 1 4 0" /><circle cx="10" cy="17" r=".8" /></Ic></TraySlot>
          <TraySlot $w={29.500}><Ic s={20} c="#222"><path d="M2.500 7.500h3l4.500-4v13l-4.500-4h-3ZM13 7.500l5 5M18 7.500l-5 5" /></Ic></TraySlot>
          <TraySlot $w={29.500}><svg width="22" height="16" viewBox="0 0 22 16"><rect x="1" y="1" width="17" height="14" rx="2.500" fill="none" stroke="#222" strokeWidth="1.200" /><rect x="3" y="3" width="9" height="10" fill="#222" /><rect x="19" y="6" width="2" height="4" fill="#222" /></svg></TraySlot>
          <Clock>13:18<br />30-04-2024</Clock>
          <TraySlot $w={40}><svg width="18" height="24" viewBox="0 0 18 24" fill="#1e3a44"><path d="M9 1c4 0 6.500 3 6.500 7v6l2.500 3H0l2.500-3V8C2.500 4 5 1 9 1Z" /><rect x="6.500" y="19" width="5" height="3" rx="1.500" /></svg></TraySlot>
          <TraySlot $w={50}>
            <svg width="30" height="36" viewBox="0 0 30 36"><defs><linearGradient id="cp" x1="0" y1="0" x2="1" y2="1"><stop offset="0" stopColor="#2aa8f2" /><stop offset=".5" stopColor="#7b5cf0" /><stop offset="1" stopColor="#f26a9a" /></linearGradient></defs><path d="M9 2h9c3 0 4 2 5 5l5 12c1 3-1 6-4 6H8c-4 0-6-3-5-7Z" fill="url(#cp)" /><path d="M3 14c-1 4 0 9 5 10l4-13c-3-2-7-1-9 3Z" fill="#4fd08a" /><rect x="8" y="25" width="21" height="11" rx="1" fill="#f6c517" /><text x="18.500" y="34" textAnchor="middle" fontFamily={UI} fontSize="9" fontWeight="700" fill="#222">PRE</text></svg>
          </TraySlot>
        </Tray>
      </Taskbar>
    </Page>
  );
}
